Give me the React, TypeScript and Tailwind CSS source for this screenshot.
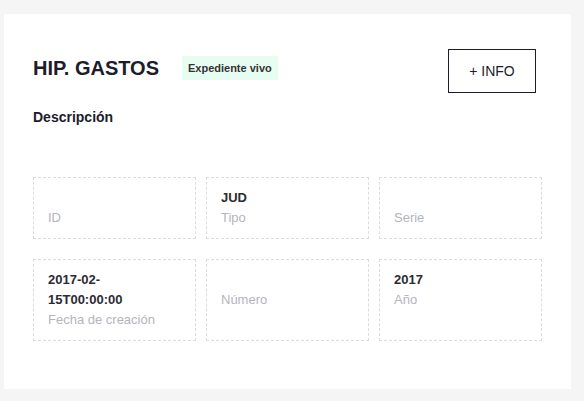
import React from 'react';

interface FieldProps {
    value?: React.ReactNode;
    label: string;
    center?: boolean;
}

const Field: React.FC<FieldProps> = ({ value, label, center }) => {
    return (
        <div className={`flex flex-col border border-dashed border-[#dcdcdc] px-[14px] py-[10px] ${center ? 'justify-center' : ''}`}>
            {value !== undefined && (
                <div className="min-h-[20px] text-[13px] font-bold leading-[20px] text-[#2b2b33]">{value}</div>
            )}
            <div className="text-[13px] leading-[20px] text-[#b4b4bc]">{label}</div>
        </div>
    );
};

export default function App() {
    return (
        <div className="min-h-[401px] w-[584px] bg-[#f5f5f5] pl-[4px] pr-[13px] pt-[14px] pb-[11px] font-['Liberation_Sans',Arial,sans-serif]">
            <div className="bg-white px-[29px] pt-[35px] pb-[48px]">
                {/* Header */}
                <div className="flex items-start justify-between">
                    <div className="flex flex-col">
                        <div className="flex items-center gap-[23px] pt-[7px]">
                            <h1 className="text-[20px] font-bold leading-[24px] text-[#1c1c2b]">HIP. GASTOS</h1>
                            <span className="bg-[#e8fdf2] px-[6px] py-[5px] text-[11px] font-bold leading-[14px] text-[#333]">
                                Expediente vivo
                            </span>
                        </div>
                        <h2 className="mt-[28px] text-[14px] font-bold leading-[18px] text-[#1c1c2b]">Descripción</h2>
                    </div>
                    <button className="mr-[6px] h-[44px] w-[88px] border border-[#1c1c2b] text-[14px] text-[#1c1c2b]">
                        + INFO
                    </button>
                </div>

                {/* Fields */}
                <div className="mt-[51px] grid grid-cols-3 gap-x-[10px] gap-y-[20px]">
                    <Field value="" label="ID" />
                    <Field value="JUD" label="Tipo" />
                    <Field value="" label="Serie" />
                    <Field value={<>2017-02-<br />15T00:00:00</>} label="Fecha de creación" />
                    <Field label="Número" center />
                    <Field value="2017" label="Año" />
                </div>
            </div>
        </div>
    );
}
